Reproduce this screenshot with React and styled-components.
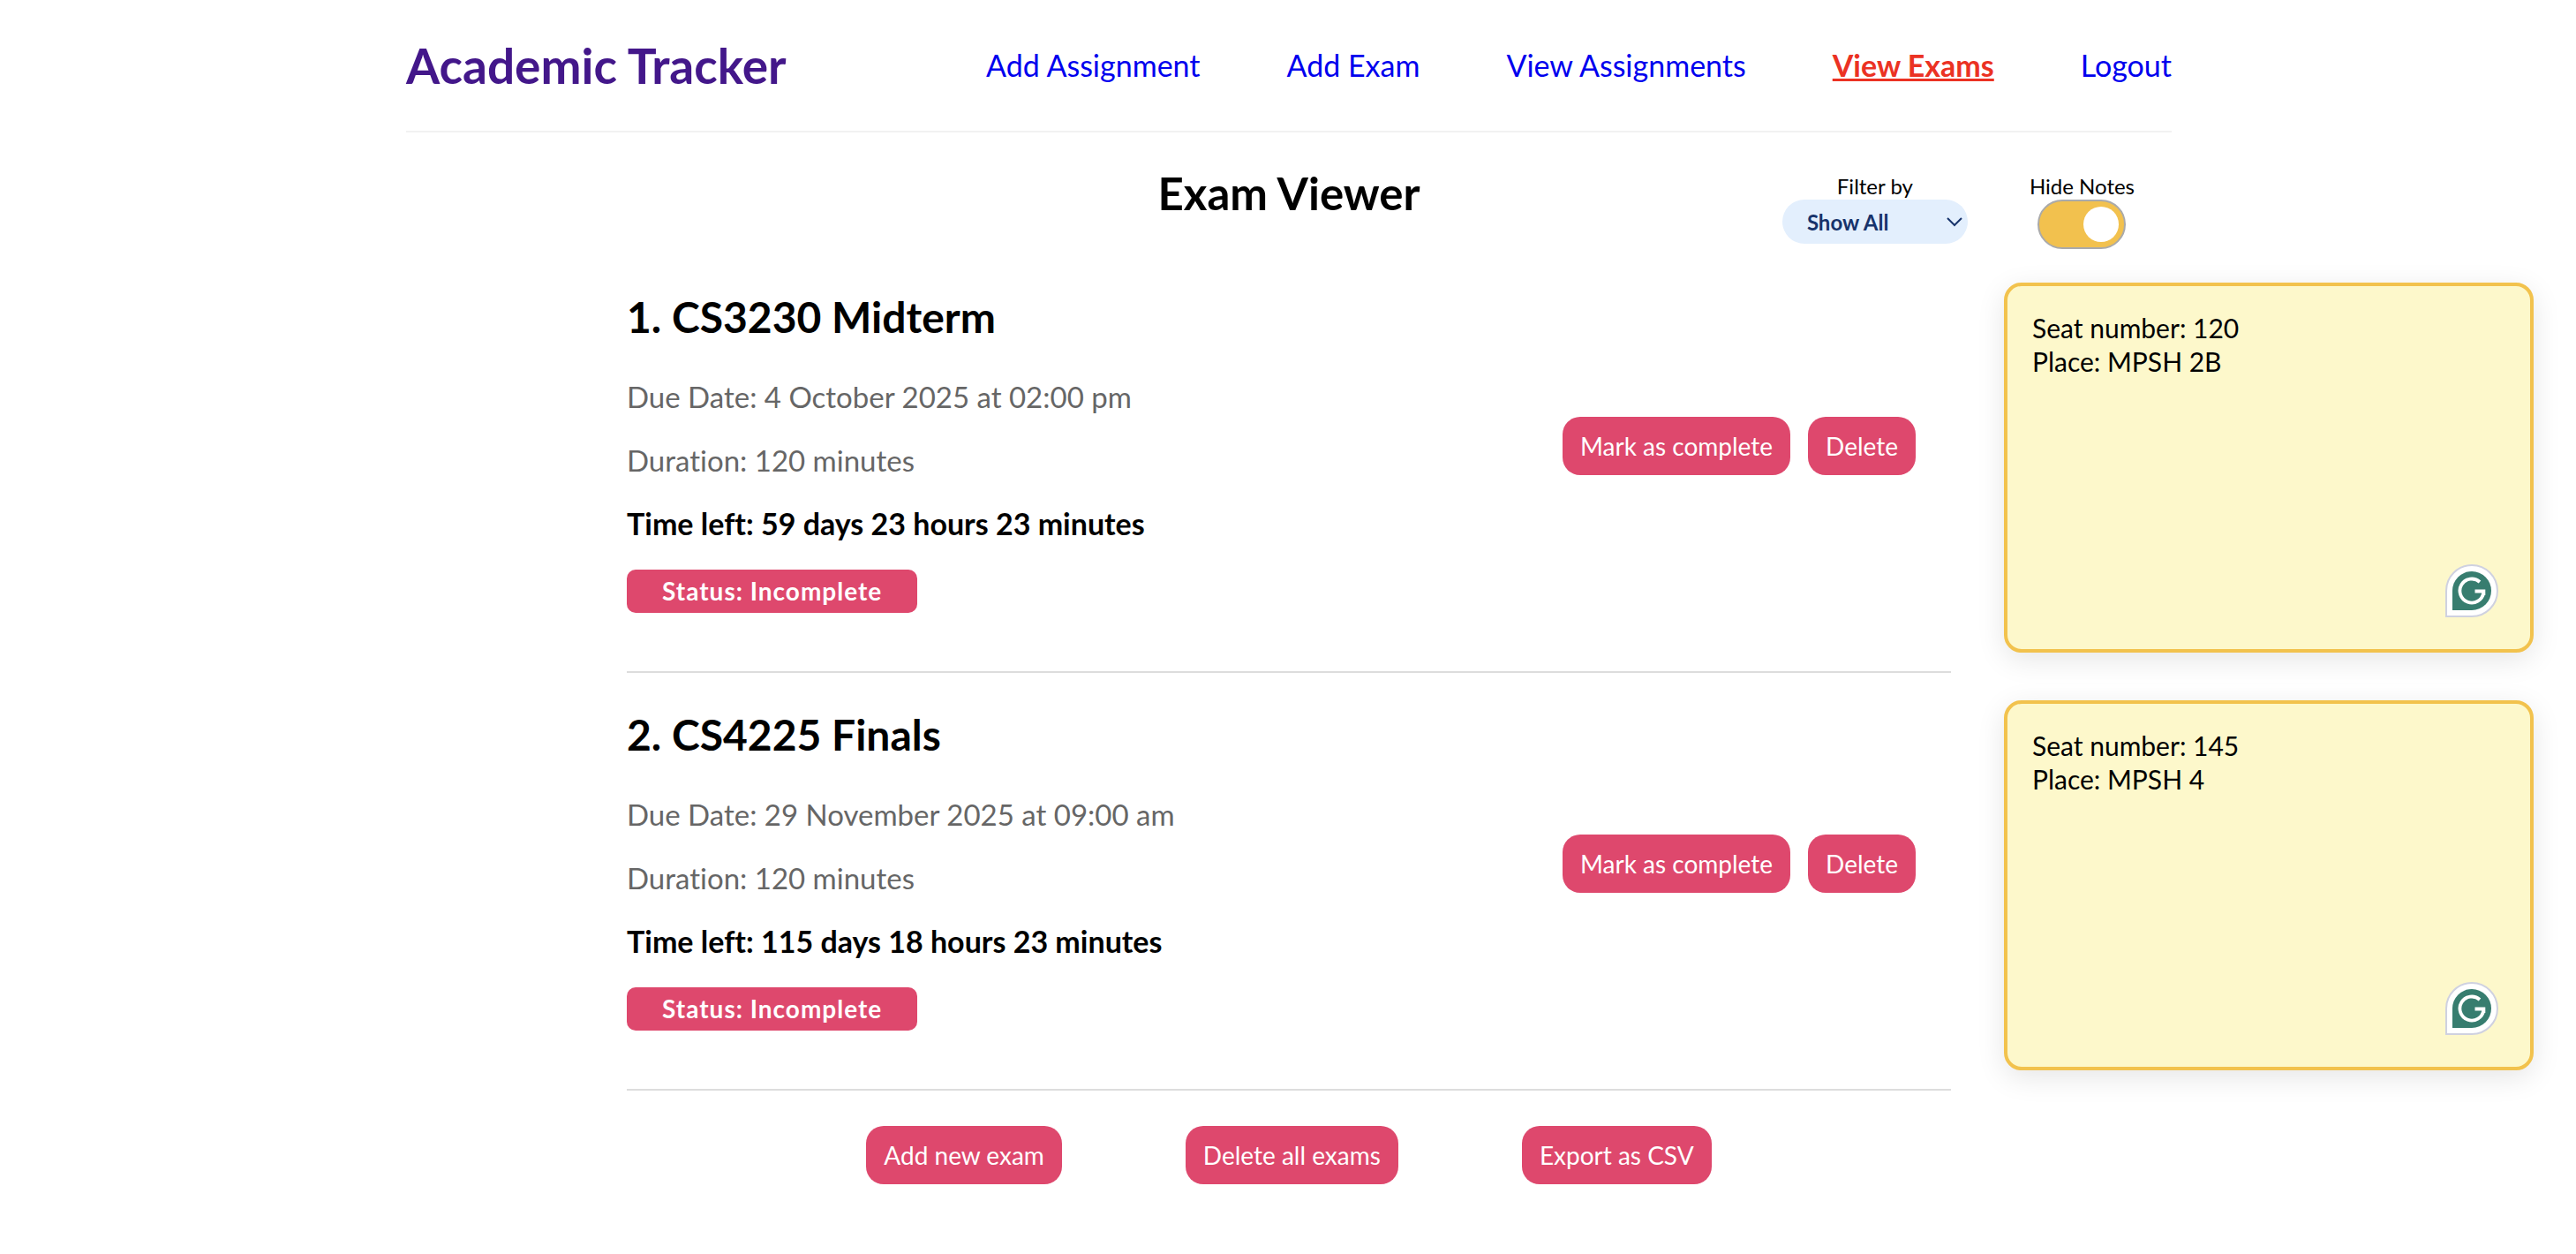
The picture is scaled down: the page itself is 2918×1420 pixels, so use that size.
import React, { useState } from "react";
import styled, { createGlobalStyle } from "styled-components";

const GlobalStyle = createGlobalStyle`
  *, *::before, *::after { box-sizing: border-box; }
  body {
    margin: 0;
    padding-left: 2px;
    background: #ffffff;
    color: #000000;
    font-family: Lato, "Open Sans", sans-serif;
    font-variant-ligatures: none;
  }
  h1, h2, p, ul { margin: 0; padding: 0; }
  button, input, select, textarea { font-family: inherit; }
`;

const Container = styled.div`
  width: 100%;
  max-width: 2000px;
  margin: 0 auto;
`;

const Header = styled.header`
  display: flex;
  justify-content: space-between;
  align-items: center;
  padding: 40px 0;
  border-bottom: 2px solid #f2f2f2;
`;

const Brand = styled.a`
  color: #43178a;
  font-size: 55px;
  font-weight: 700;
  line-height: 68px;
  text-decoration: none;
`;

const Nav = styled.nav`
  display: flex;
  gap: 98px;
`;

const NavLink = styled.a`
  color: ${(p) => (p.$active ? "#eb3223" : "#0000ee")};
  font-size: 34px;
  font-weight: ${(p) => (p.$active ? 700 : 400)};
  line-height: 68px;
  text-decoration: ${(p) => (p.$active ? "underline" : "none")};
  text-decoration-thickness: 3px;
`;

const TitleBar = styled.div`
  display: grid;
  grid-template-columns: 1fr auto 1fr;
  align-items: start;
  padding: 46px 0 7px;
`;

const PageTitle = styled.h1`
  grid-column: 2;
  font-size: 51px;
  font-weight: 700;
  line-height: 46px;
`;

const Controls = styled.div`
  display: flex;
  justify-content: flex-end;
  gap: 70px;
  padding-right: 42px;
`;

const Control = styled.div`
  display: flex;
  flex-direction: column;
  align-items: center;
`;

const ControlLabel = styled.label`
  font-size: 24px;
  line-height: 30px;
`;

const SelectBox = styled.div`
  position: relative;
  display: flex;
`;

const Select = styled.select`
  appearance: none;
  width: 210px;
  height: 50px;
  padding: 0 40px 0 28px;
  border: 0;
  border-radius: 25px;
  background: #e3effd;
  color: #17336b;
  font-size: 24px;
  font-weight: 700;
`;

const Chevron = styled.svg`
  position: absolute;
  top: 19px;
  right: 6px;
  width: 18px;
  height: 12px;
  pointer-events: none;
`;

const Toggle = styled.input`
  appearance: none;
  display: flex;
  align-items: center;
  justify-content: ${(p) => (p.checked ? "flex-end" : "flex-start")};
  width: 100px;
  height: 56px;
  margin: 0;
  padding: 6px;
  border: 2px solid #aaaaaa;
  border-radius: 28px;
  background: ${(p) => (p.checked ? "#f2c14e" : "#cccccc")};

  &::before {
    content: "";
    width: 40px;
    height: 40px;
    border-radius: 50%;
    background: #ffffff;
  }
`;

const ExamList = styled.ul`
  list-style: none;
`;

const ExamRow = styled.li`
  display: grid;
  grid-template-columns: minmax(0, 1fr) minmax(0, 1500px) minmax(0, 1fr);
`;

const Exam = styled.article`
  grid-column: 2;
  display: flex;
  justify-content: space-between;
  align-items: center;
  padding: 40px 40px 66px 0;
  border-bottom: 2px solid #dddddd;
`;

const Details = styled.div`
  display: flex;
  flex-direction: column;
  align-items: flex-start;
  gap: 32px;
`;

const ExamTitle = styled.h2`
  padding-bottom: 8px;
  font-size: 48px;
  font-weight: 700;
  line-height: 60px;
`;

const Detail = styled.p`
  color: #666666;
  font-size: 33px;
  line-height: 40px;
`;

const TimeLeft = styled.p`
  font-size: 34px;
  font-weight: 700;
  line-height: 40px;
`;

const Status = styled.p`
  padding: 0 40px;
  border-radius: 10px;
  background: #de486d;
  color: #ffffff;
  font-size: 28px;
  font-weight: 700;
  letter-spacing: 1px;
  line-height: 49px;
`;

const Actions = styled.div`
  display: flex;
  gap: 20px;
  padding-bottom: 14px;
`;

const Button = styled.button`
  padding: 16px 20px;
  border: 0;
  border-radius: 20px;
  background: #de486d;
  color: #ffffff;
  font-size: 28px;
  line-height: 34px;
`;

const Note = styled.div`
  position: relative;
  display: grid;
  margin: 31px 48px 23px 60px;
`;

const NoteText = styled.textarea`
  width: 100%;
  padding: 28px;
  border: 4px solid #f2c24d;
  border-radius: 20px;
  background: #fdf8cb;
  box-shadow: 0 8px 32px rgba(0, 0, 0, 0.1);
  color: #000000;
  font-size: 30px;
  line-height: 38px;
  resize: none;
`;

const Assistant = styled.svg`
  position: absolute;
  right: 40px;
  bottom: 40px;
  width: 60px;
  height: 60px;
`;

const Footer = styled.div`
  display: flex;
  justify-content: center;
  gap: 140px;
  padding: 40px 0;
`;

const links = ["Add Assignment", "Add Exam", "View Assignments", "View Exams", "Logout"];

const exams = [
  {
    name: "CS3230 Midterm",
    due: "4 October 2025 at 02:00 pm",
    left: "59 days 23 hours 23 minutes",
    note: "Seat number: 120\nPlace: MPSH 2B",
  },
  {
    name: "CS4225 Finals",
    due: "29 November 2025 at 09:00 am",
    left: "115 days 18 hours 23 minutes",
    note: "Seat number: 145\nPlace: MPSH 4",
  },
];

function AssistantIcon() {
  return (
    <Assistant viewBox="0 0 60 60" aria-hidden="true">
      <path d="M1 59V30A29 29 0 1 1 30 59Z" fill="#ffffff" stroke="#cfd1e0" strokeWidth="2" />
      <path d="M8 52V30A22 22 0 1 1 30 52Z" fill="#377d6f" />
      <path d="M39 20A13.5 13.5 0 1 0 43.3 32" fill="none" stroke="#ffffff" strokeWidth="3.8" />
      <path d="M33.5 30.5H43.4V35" fill="none" stroke="#ffffff" strokeWidth="3.8" />
    </Assistant>
  );
}

export default function App() {
  const [showNotes, setShowNotes] = useState(true);
  return (
    <>
      <GlobalStyle />
      <Container>
        <Header>
          <Brand href="#">Academic Tracker</Brand>
          <Nav>
            {links.map((text) => (
              <NavLink key={text} href="#" $active={text === "View Exams"}>
                {text}
              </NavLink>
            ))}
          </Nav>
        </Header>
        <TitleBar>
          <PageTitle>Exam Viewer</PageTitle>
          <Controls>
            <Control>
              <ControlLabel htmlFor="filter">Filter by</ControlLabel>
              <SelectBox>
                <Select id="filter">
                  <option>Show All</option>
                </Select>
                <Chevron viewBox="0 0 18 12" aria-hidden="true">
                  <path d="M1 2L9 10L17 2" fill="none" stroke="#17336b" strokeWidth="2" />
                </Chevron>
              </SelectBox>
            </Control>
            <Control>
              <ControlLabel htmlFor="notes">Hide Notes</ControlLabel>
              <Toggle
                id="notes"
                type="checkbox"
                checked={showNotes}
                onChange={(e) => setShowNotes(e.target.checked)}
              />
            </Control>
          </Controls>
        </TitleBar>
      </Container>
      <ExamList>
        {exams.map((exam, i) => (
          <ExamRow key={exam.name}>
            <Exam>
              <Details>
                <ExamTitle>{`${i + 1}. ${exam.name}`}</ExamTitle>
                <Detail>{`Due Date: ${exam.due}`}</Detail>
                <Detail>Duration: 120 minutes</Detail>
                <TimeLeft>{`Time left: ${exam.left}`}</TimeLeft>
                <Status>Status: Incomplete</Status>
              </Details>
              <Actions>
                <Button type="button">Mark as complete</Button>
                <Button type="button">Delete</Button>
              </Actions>
            </Exam>
            {showNotes && (
              <Note>
                <NoteText aria-label={`Notes for ${exam.name}`} defaultValue={exam.note} />
                <AssistantIcon />
              </Note>
            )}
          </ExamRow>
        ))}
      </ExamList>
      <Footer>
        <Button type="button">Add new exam</Button>
        <Button type="button">Delete all exams</Button>
        <Button type="button">Export as CSV</Button>
      </Footer>
    </>
  );
}
